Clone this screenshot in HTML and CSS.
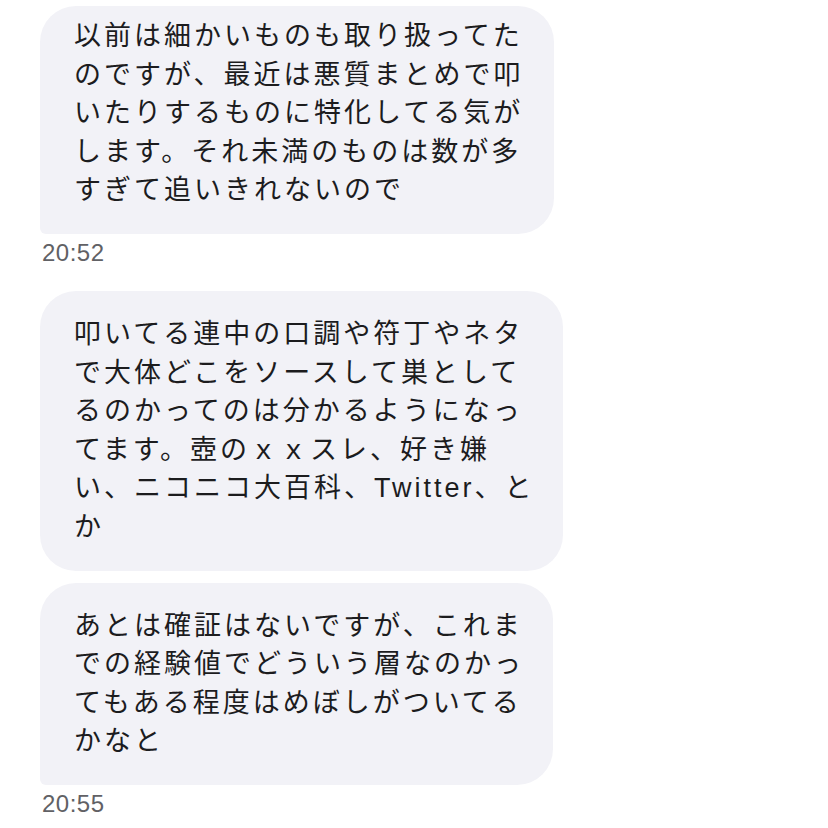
FILE: index.html
```html
<!DOCTYPE html>
<html lang="ja">
<head>
<meta charset="utf-8">
<title>Chat</title>
<link rel="stylesheet" href="styles.css">
</head>
<body>
<main class="thread">
  <div class="bubble bubble-first bubble-tail w1">以前は細かいものも取り扱ってた<br>のですが、最近は悪質まとめで叩<br>いたりするものに特化してる気が<br>します。それ未満のものは数が多<br>すぎて追いきれないので</div>
  <div class="time">20:52</div>
  <div class="bubble w2">叩いてる連中の口調や符丁やネタ<br>で大体どこをソースして巣として<br>るのかってのは分かるようになっ<br>てます。壺のｘｘスレ、好き嫌<br>い、ニコニコ大百科、Twitter、と<br>か</div>
  <div class="bubble bubble-tail bubble-next w3">あとは確証はないですが、これま<br>での経験値でどういう層なのかっ<br>てもある程度はめぼしがついてる<br>かなと</div>
  <div class="time">20:55</div>
</main>
</body>
</html>
```
FILE: styles.css
```css
html, body {
  margin: 0;
  padding: 0;
  background: #ffffff;
}
.thread {
  display: flex;
  flex-direction: column;
  align-items: flex-start;
  padding: 6px 0 0 40px;
}
.bubble {
  box-sizing: border-box;
  background: #f2f2f7;
  color: #1c1c1e;
  font-family: "Liberation Sans", "Noto Sans CJK JP", sans-serif;
  font-size: 27px;
  letter-spacing: 3px;
  line-height: 38.6px;
  white-space: nowrap;
  padding: 24px 20px 24px 34px;
  border-radius: 36px;
}
.bubble-first {
  padding-top: 11px;
}
.bubble-tail {
  border-bottom-left-radius: 6px;
}
.bubble-next {
  margin-top: 12px;
}
.w1 { width: 514px; }
.w2 { width: 523px; }
.w3 { width: 513px; }
.time {
  font-family: "Liberation Sans", "Helvetica", sans-serif;
  font-size: 24px;
  letter-spacing: 0.5px;
  line-height: 28px;
  color: #616165;
  margin: 5px 0 24px 2px;
}
```
